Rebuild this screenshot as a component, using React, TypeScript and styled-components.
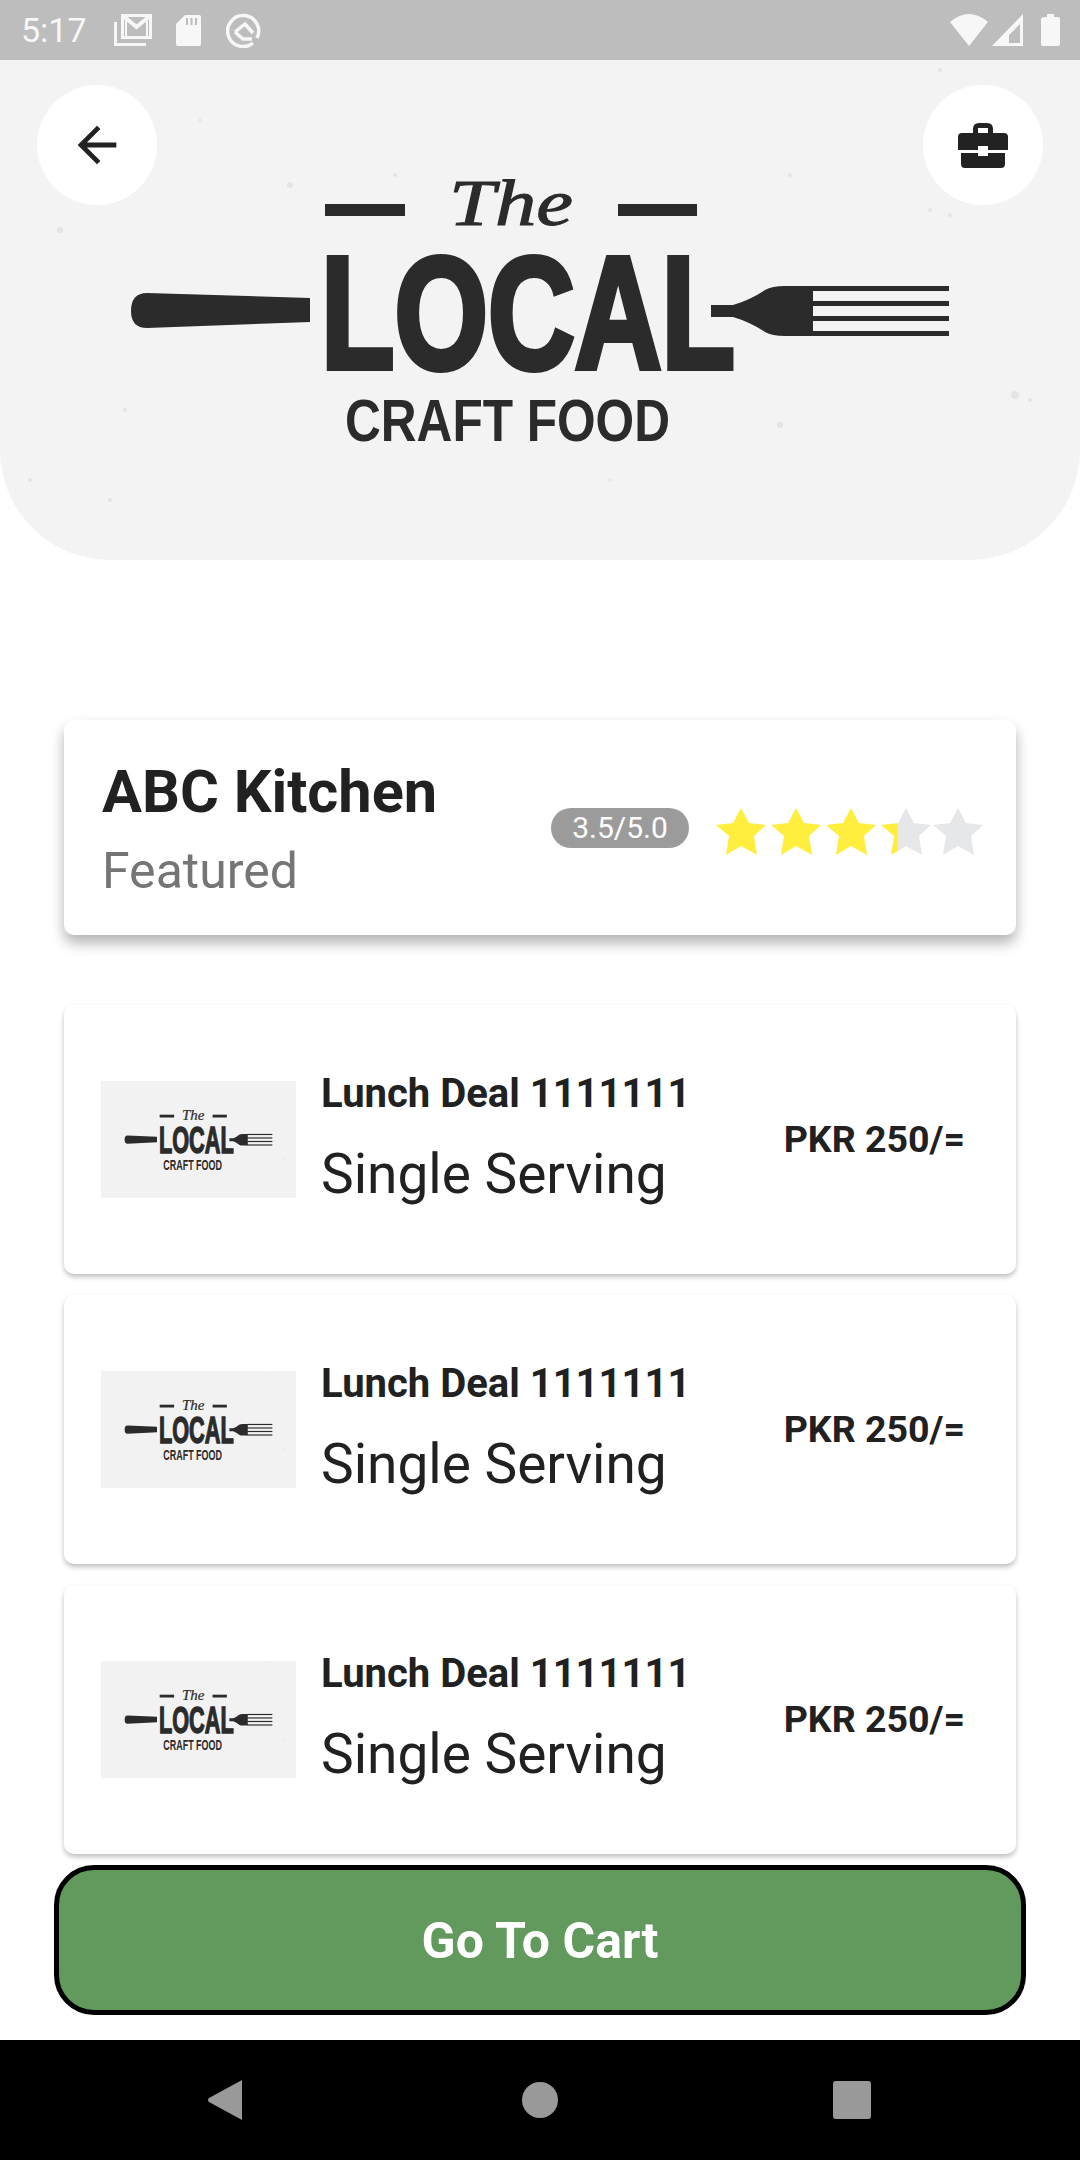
import React from "react";
import styled, { createGlobalStyle } from "styled-components";

const GlobalStyle = createGlobalStyle`
    html, body {
        margin: 0;
        padding: 0;
        background: #ffffff;
    }
    * {
        box-sizing: border-box;
    }
`;

const StyledPage = styled.div`
    width: 1080px;
    height: 2160px;
    display: flex;
    flex-direction: column;
    background: #ffffff;
    font-family: Roboto, "Noto Sans", sans-serif;
    overflow: hidden;
`;

const StyledStatusBar = styled.div`
    height: 60px;
    flex: none;
    display: flex;
    align-items: center;
    justify-content: space-between;
    padding: 0 20px 0 21px;
    background: #bdbdbd;
    color: #f7f7f7;
`;

const StyledStatusGroup = styled.div`
    display: flex;
    align-items: center;
`;

const StyledTime = styled.div`
    font-size: 34px;
    width: 93px;
    line-height: 60px;
`;

const StyledHero = styled.div`
    position: relative;
    height: 500px;
    flex: none;
    background: #f3f3f3;
    border-bottom-left-radius: 110px;
    border-bottom-right-radius: 110px;
    overflow: hidden;
`;

const StyledRoundButton = styled.button<{ $side: "left" | "right" }>`
    all: unset;
    position: absolute;
    top: 25px;
    ${(p) => (p.$side === "left" ? "left: 37px;" : "right: 37px;")}
    width: 120px;
    height: 120px;
    border-radius: 50%;
    background: #ffffff;
    display: flex;
    align-items: center;
    justify-content: center;
    color: #222222;
`;

const StyledLogoSvg = styled.svg`
    display: block;
    width: 100%;
    height: 100%;
`;

const StyledMain = styled.div`
    flex: 1;
    display: flex;
    flex-direction: column;
    padding: 160px 64px 0;
`;

const StyledKitchenCard = styled.div`
    height: 215px;
    flex: none;
    display: flex;
    align-items: center;
    padding: 0 33px 0 38px;
    margin-bottom: 70px;
    background: #ffffff;
    border-radius: 10px;
    box-shadow: 0 8px 14px rgba(0, 0, 0, 0.3);
`;

const StyledKitchenText = styled.div`
    flex: 1;
    display: flex;
    flex-direction: column;
    padding-top: 5px;
`;

const StyledKitchenName = styled.div`
    font-size: 59.5px;
    line-height: 72px;
    font-weight: 700;
    color: #212121;
`;

const StyledKitchenType = styled.div`
    font-size: 50px;
    line-height: 66px;
    margin-top: 10px;
    color: #757575;
`;

const StyledRatingPill = styled.div`
    width: 138px;
    height: 40px;
    border-radius: 20px;
    background: #9b9b9b;
    color: #ffffff;
    font-size: 30px;
    line-height: 40px;
    text-align: center;
`;

const StyledStars = styled.div`
    display: flex;
    gap: 5px;
    margin-left: 27px;
    margin-top: 8px;

    svg:last-child {
        margin-left: -3px;
    }
`;

const StyledDealList = styled.div`
    display: flex;
    flex-direction: column;
    gap: 21px;
`;

const StyledDealCard = styled.div`
    height: 269px;
    display: flex;
    align-items: center;
    padding: 0 51px 0 37px;
    background: #ffffff;
    border-radius: 10px;
    box-shadow: 0 3px 5px rgba(0, 0, 0, 0.25);
`;

const StyledDealThumb = styled.div`
    width: 195px;
    height: 117px;
    flex: none;
    background: #f2f2f2;
`;

const StyledDealText = styled.div`
    flex: 1;
    display: flex;
    flex-direction: column;
    margin-left: 25px;
    padding-bottom: 3px;
`;

const StyledDealTitle = styled.div`
    font-size: 40px;
    line-height: 50px;
    font-weight: 700;
    color: #212121;
`;

const StyledDealServing = styled.div`
    font-size: 55px;
    line-height: 66px;
    margin-top: 22px;
    color: #212121;
`;

const StyledDealPrice = styled.div`
    font-size: 37.5px;
    font-weight: 700;
    padding-bottom: 2px;
    color: #212121;
`;

const StyledFooter = styled.div`
    flex: none;
    padding: 11px 54px 25px;
`;

const StyledCartButton = styled.button`
    all: unset;
    display: block;
    box-sizing: border-box;
    width: 100%;
    height: 150px;
    padding-top: 2px;
    border: 5px solid #000000;
    border-radius: 40px;
    background: #62995c;
    color: #ffffff;
    font-size: 50px;
    font-weight: 700;
    text-align: center;
`;

const StyledNavRow = styled.div`
    height: 120px;
    flex: none;
    display: flex;
    align-items: center;
    padding-left: 208px;
    background: #000000;
`;

const StyledNavCircle = styled.div`
    width: 36px;
    height: 36px;
    margin-left: 280px;
    border-radius: 50%;
    background: #999999;
`;

const StyledNavSquare = styled.div`
    width: 38px;
    height: 38px;
    margin-left: 275px;
    border-radius: 3px;
    background: #999999;
`;

const speckles = [
    [60, 170, 3], [118, 60, 2], [290, 125, 3], [395, 115, 2], [790, 115, 2], [930, 150, 2],
    [1015, 335, 4], [780, 365, 3], [125, 350, 2], [30, 420, 2], [110, 440, 2], [610, 420, 1.5],
    [200, 60, 1.5], [940, 10, 2], [950, 155, 2], [1030, 340, 2],
];

const LocalLogo = () => (
    <StyledLogoSvg viewBox="0 0 1080 500" preserveAspectRatio="none">
        {speckles.map(([cx, cy, r], i) => (
            <circle key={i} cx={cx} cy={cy} r={r} fill="#e4e4e4" />
        ))}
        <g fill="#2b2b2b">
            <path d="M147 233 L310 238 V262 L147 268 Q131 268 131 251 Q131 233 147 233 Z" />
            <rect x="325" y="144" width="80" height="12" />
            <rect x="618" y="144" width="79" height="12" />
            <text x="449" y="165" fontFamily="'Liberation Serif', serif" fontStyle="italic" fontWeight="400" fontSize="66" stroke="#2b2b2b" strokeWidth="1" textLength="124" lengthAdjust="spacingAndGlyphs">The</text>
            <text x="321" y="308" fontFamily="'Liberation Sans', sans-serif" fontWeight="700" fontSize="160" stroke="#2b2b2b" strokeWidth="6" textLength="414" lengthAdjust="spacingAndGlyphs">LOCAL</text>
            <text x="345" y="381" fontFamily="'Liberation Sans', sans-serif" fontWeight="700" fontSize="59" textLength="325" lengthAdjust="spacingAndGlyphs">CRAFT FOOD</text>
            <path d="M711 245 H733 Q750 240 765 230 Q772 226 785 226 H813 V276 H785 Q772 276 765 272 Q750 262 733 257 H711 Z" />
            <rect x="810" y="226" width="139" height="5" />
            <rect x="810" y="241" width="139" height="5" />
            <rect x="810" y="256" width="139" height="5" />
            <rect x="810" y="271" width="139" height="5" />
        </g>
    </StyledLogoSvg>
);

const STAR_POINTS = "25,0 33,15 50,17 38,28 41,47 25,38 10,47 13,28 0,17 17,15";

const Star = ({ id, filled }: { id: string; filled: number }) => (
    <svg width="50" height="47" viewBox="0 0 50 47">
        <defs>
            <linearGradient id={id}>
                <stop offset={filled} stopColor="#ffee3d" />
                <stop offset={filled} stopColor="#e6e7e9" />
            </linearGradient>
        </defs>
        <polygon points={STAR_POINTS} fill={`url(#${id})`} />
    </svg>
);

const starFills = [1, 1, 1, 0.35, 0];
const deals = [1, 2, 3];

const App = () => {
    return (
        <StyledPage>
            <GlobalStyle />
            <StyledStatusBar>
                <StyledStatusGroup>
                    <StyledTime>5:17</StyledTime>
                    <svg width="38" height="32" viewBox="0 0 38 32" style={{ marginRight: 24 }}>
                        <rect x="8.5" y="1.5" width="28" height="22" fill="none" stroke="#f7f7f7" strokeWidth="3" />
                        <path d="M8 1L22.5 13L37 1" fill="none" stroke="#f7f7f7" strokeWidth="4" />
                        <path d="M32 22V4H34V22ZM11 22V4H13V22Z" fill="#f7f7f7" />
                        <path d="M0 8H3V29H32V32H0Z" fill="#f7f7f7" />
                    </svg>
                    <svg width="25" height="31" viewBox="0 0 25 31" style={{ marginRight: 25 }}>
                        <path d="M9 0H23Q25 0 25 2V29Q25 31 23 31H2Q0 31 0 29V9Z" fill="#f7f7f7" />
                        <path d="M10 3H12V10H10ZM14.5 3H16.5V10H14.5ZM19 3H21V10H19Z" fill="#bdbdbd" />
                    </svg>
                    <svg width="35" height="35" viewBox="0 0 35 35">
                        <path d="M27 30A15.5 15.5 0 1 1 31 25" fill="none" stroke="#f7f7f7" strokeWidth="3.5" />
                        <path d="M9 19L19 11L27 20" fill="none" stroke="#f7f7f7" strokeWidth="3.5" />
                        <path d="M9 19L17 26H26" fill="none" stroke="#f7f7f7" strokeWidth="3.5" />
                    </svg>
                </StyledStatusGroup>
                <StyledStatusGroup>
                    <svg width="38" height="32" viewBox="0 0 38 32" style={{ marginRight: 4 }}>
                        <path d="M0 8Q19 -8 38 8L19 32Z" fill="#f7f7f7" />
                    </svg>
                    <svg width="31" height="32" viewBox="0 0 31 32" style={{ marginRight: 18 }}>
                        <path fillRule="evenodd" d="M31 0V32H0ZM28 10L17 21V29H28Z" fill="#f7f7f7" />
                    </svg>
                    <svg width="19" height="32" viewBox="0 0 19 32">
                        <path d="M5 3H6V0H13V3H17Q19 3 19 5V30Q19 32 17 32H2Q0 32 0 30V5Q0 3 5 3Z" fill="#f7f7f7" />
                    </svg>
                </StyledStatusGroup>
            </StyledStatusBar>

            <StyledHero>
                <LocalLogo />
                <StyledRoundButton $side="left">
                    <svg width="58" height="58" viewBox="0 0 24 24" fill="#222222">
                        <path d="M20 11H7.83l5.59-5.59L12 4l-8 8 8 8 1.41-1.41L7.83 13H20v-2z" />
                    </svg>
                </StyledRoundButton>
                <StyledRoundButton $side="right">
                    <svg width="50" height="45" viewBox="0 0 50 45" fill="#222222">
                        <path fillRule="evenodd" d="M15 10V6Q15 0 21 0H29Q35 0 35 6V10H46Q50 10 50 14V27H30V23H20V27H0V14Q0 10 4 10ZM20 10H30V5H20Z" />
                        <path d="M3 30H20V33H30V30H47V41Q47 45 43 45H7Q3 45 3 41Z" />
                    </svg>
                </StyledRoundButton>
            </StyledHero>

            <StyledMain>
                <StyledKitchenCard>
                    <StyledKitchenText>
                        <StyledKitchenName>ABC Kitchen</StyledKitchenName>
                        <StyledKitchenType>Featured</StyledKitchenType>
                    </StyledKitchenText>
                    <StyledRatingPill>3.5/5.0</StyledRatingPill>
                    <StyledStars>
                        {starFills.map((f, i) => (
                            <Star key={i} id={`star-${i}`} filled={f} />
                        ))}
                    </StyledStars>
                </StyledKitchenCard>
                <StyledDealList>
                    {deals.map((d) => (
                        <StyledDealCard key={d}>
                            <StyledDealThumb>
                                <LocalLogo />
                            </StyledDealThumb>
                            <StyledDealText>
                                <StyledDealTitle>Lunch Deal 1111111</StyledDealTitle>
                                <StyledDealServing>Single Serving</StyledDealServing>
                            </StyledDealText>
                            <StyledDealPrice>PKR 250/=</StyledDealPrice>
                        </StyledDealCard>
                    ))}
                </StyledDealList>
            </StyledMain>

            <StyledFooter>
                <StyledCartButton>Go To Cart</StyledCartButton>
            </StyledFooter>

            <StyledNavRow>
                <svg width="34" height="40" viewBox="0 0 34 40">
                    <path d="M34 0V40L1 22Q-1 20 1 18Z" fill="#999999" />
                </svg>
                <StyledNavCircle />
                <StyledNavSquare />
            </StyledNavRow>
        </StyledPage>
    );
};

export default App;
